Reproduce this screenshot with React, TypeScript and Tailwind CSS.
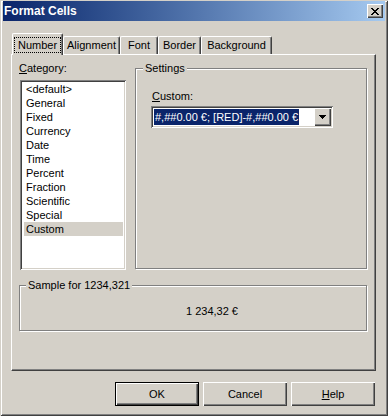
const categories = [
  '<default>',
  'General',
  'Fixed',
  'Currency',
  'Date',
  'Time',
  'Percent',
  'Fraction',
  'Scientific',
  'Special',
  'Custom',
];

const raised =
  'bg-[#d4d0c8] shadow-[inset_1px_1px_0_#ffffff,inset_-1px_-1px_0_#404040,inset_-2px_-2px_0_#808080]';
const sunken =
  'bg-white shadow-[inset_1px_1px_0_#808080,inset_-1px_-1px_0_#ffffff,inset_2px_2px_0_#404040,inset_-2px_-2px_0_#d4d0c8]';
const etched = 'border border-[#808080] shadow-[1px_1px_0_#ffffff,inset_1px_1px_0_#ffffff]';

function Tab({ label, width, active }: { label: string; width: string; active?: boolean }) {
  if (active) {
    return (
      <div
        className={`${width} h-[22px] -mb-px relative z-10 flex items-center justify-center bg-[#d4d0c8] border-t border-l border-r border-t-white border-l-white border-r-[#404040] rounded-t-[2px] shadow-[inset_-1px_0_0_#808080]`}
      >
        <span className="border border-dotted border-black px-[3px] leading-[14px]">{label}</span>
      </div>
    );
  }
  return (
    <div
      className={`${width} h-[18px] flex items-center justify-center border-t border-l border-r border-t-white border-l-white border-r-[#404040] rounded-t-[2px] shadow-[inset_-1px_0_0_#808080]`}
    >
      {label}
    </div>
  );
}

function Button({ children, isDefault }: { children: React.ReactNode; isDefault?: boolean }) {
  return (
    <div
      className={`w-[84px] h-[24px] flex items-center justify-center ${raised} ${
        isDefault ? 'border border-black' : ''
      }`}
    >
      {children}
    </div>
  );
}

export default function App() {
  return (
    <div className="w-[388px] h-[416px] bg-[#d4d0c8] font-['Liberation_Sans',Arial,sans-serif] text-[11px] leading-[13px] text-black pt-px px-[3px] flex flex-col shadow-[inset_1px_1px_0_#d4d0c8,inset_-1px_-1px_0_#404040,inset_2px_2px_0_#ffffff,inset_-2px_-2px_0_#808080]">
      {/* Title bar */}
      <div className="h-[20px] flex items-center justify-between pl-px pr-[2px] bg-gradient-to-r from-[#0a246a] to-[#a6caf0]">
        <span className="text-white font-bold text-[12px]">Format Cells</span>
        <div className={`w-[16px] h-[14px] flex items-center justify-center ${raised}`}>
          <svg width="8" height="7" viewBox="0 0 8 7" shapeRendering="crispEdges">
            <path d="M0 0h2v1h-2zM6 0h2v1h-2zM1 1h2v1h-2zM5 1h2v1h-2zM2 2h4v1h-4zM3 3h2v1h-2zM2 4h4v1h-4zM1 5h2v1h-2zM5 5h2v1h-2zM0 6h2v1h-2zM6 6h2v1h-2z" fill="#000" />
          </svg>
        </div>
      </div>

      {/* Tabs */}
      <div className="ml-[8px] mt-[12px]">
        <div className="flex items-end h-[21px] pl-px">
          <Tab label="Number" width="w-[51px]" active />
          <Tab label="Alignment" width="w-[57px]" />
          <Tab label="Font" width="w-[38px]" />
          <Tab label="Border" width="w-[43px]" />
          <Tab label="Background" width="w-[71px]" />
        </div>

        {/* Tab panel */}
        <div className="w-[365px] h-[317px] border-t border-l border-r border-b border-t-white border-l-white border-r-[#404040] border-b-[#404040] shadow-[inset_-1px_-1px_0_#808080] pt-[7px]">
          <div className="flex">
            {/* Category */}
            <div className="ml-[7px] w-[107px]">
              <div>
                <u>C</u>ategory:
              </div>
              <div className={`mt-[5px] ml-px w-[106px] h-[190px] ${sunken} pt-[2px] pl-[4px] pr-[3px]`}>
                {categories.map((c) => (
                  <div
                    key={c}
                    className={`h-[14px] leading-[14px] pl-[2px] ${c === 'Custom' ? 'bg-[#d4d0c8]' : ''}`}
                  >
                    {c}
                  </div>
                ))}
              </div>
            </div>

            {/* Settings */}
            <div className={`ml-[9px] mt-[6px] w-[232px] h-[201px] relative ${etched}`}>
              <span className="absolute -top-[7px] left-[7px] px-[2px] bg-[#d4d0c8]">Settings</span>
              <div className="ml-[16px] mt-[21px]">
                <u>C</u>ustom:
              </div>
              <div className={`ml-[15px] mt-[3px] w-[182px] h-[22px] p-[2px] flex items-center ${sunken}`}>
                <div className="flex-1 pl-px flex items-center h-full">
                  <span className="bg-[#0a246a] text-white h-[16px] leading-[16px] px-px whitespace-nowrap">
                    #,##0.00 €; [RED]-#,##0.00 €
                  </span>
                </div>
                <div className={`w-[17px] h-full flex items-center justify-center ${raised}`}>
                  <svg width="7" height="4" viewBox="0 0 7 4" shapeRendering="crispEdges">
                    <path d="M0 0h7v1h-7zM1 1h5v1h-5zM2 2h3v1h-3zM3 3h1v1h-1z" fill="#000" />
                  </svg>
                </div>
              </div>
            </div>
          </div>

          {/* Sample */}
          <div className={`ml-[7px] mt-[15px] w-[348px] h-[46px] relative ${etched}`}>
            <span className="absolute -top-[7px] left-[6px] px-[2px] bg-[#d4d0c8]">Sample for 1234,321</span>
            <div className="pt-[19px] pl-[166px]">1 234,32 €</div>
          </div>
        </div>

        {/* Buttons */}
        <div className="flex gap-[4px] mt-[11px] ml-[104px]">
          <Button isDefault>OK</Button>
          <Button>Cancel</Button>
          <Button>
            <span>
              <u>H</u>elp
            </span>
          </Button>
        </div>
      </div>
    </div>
  );
}
